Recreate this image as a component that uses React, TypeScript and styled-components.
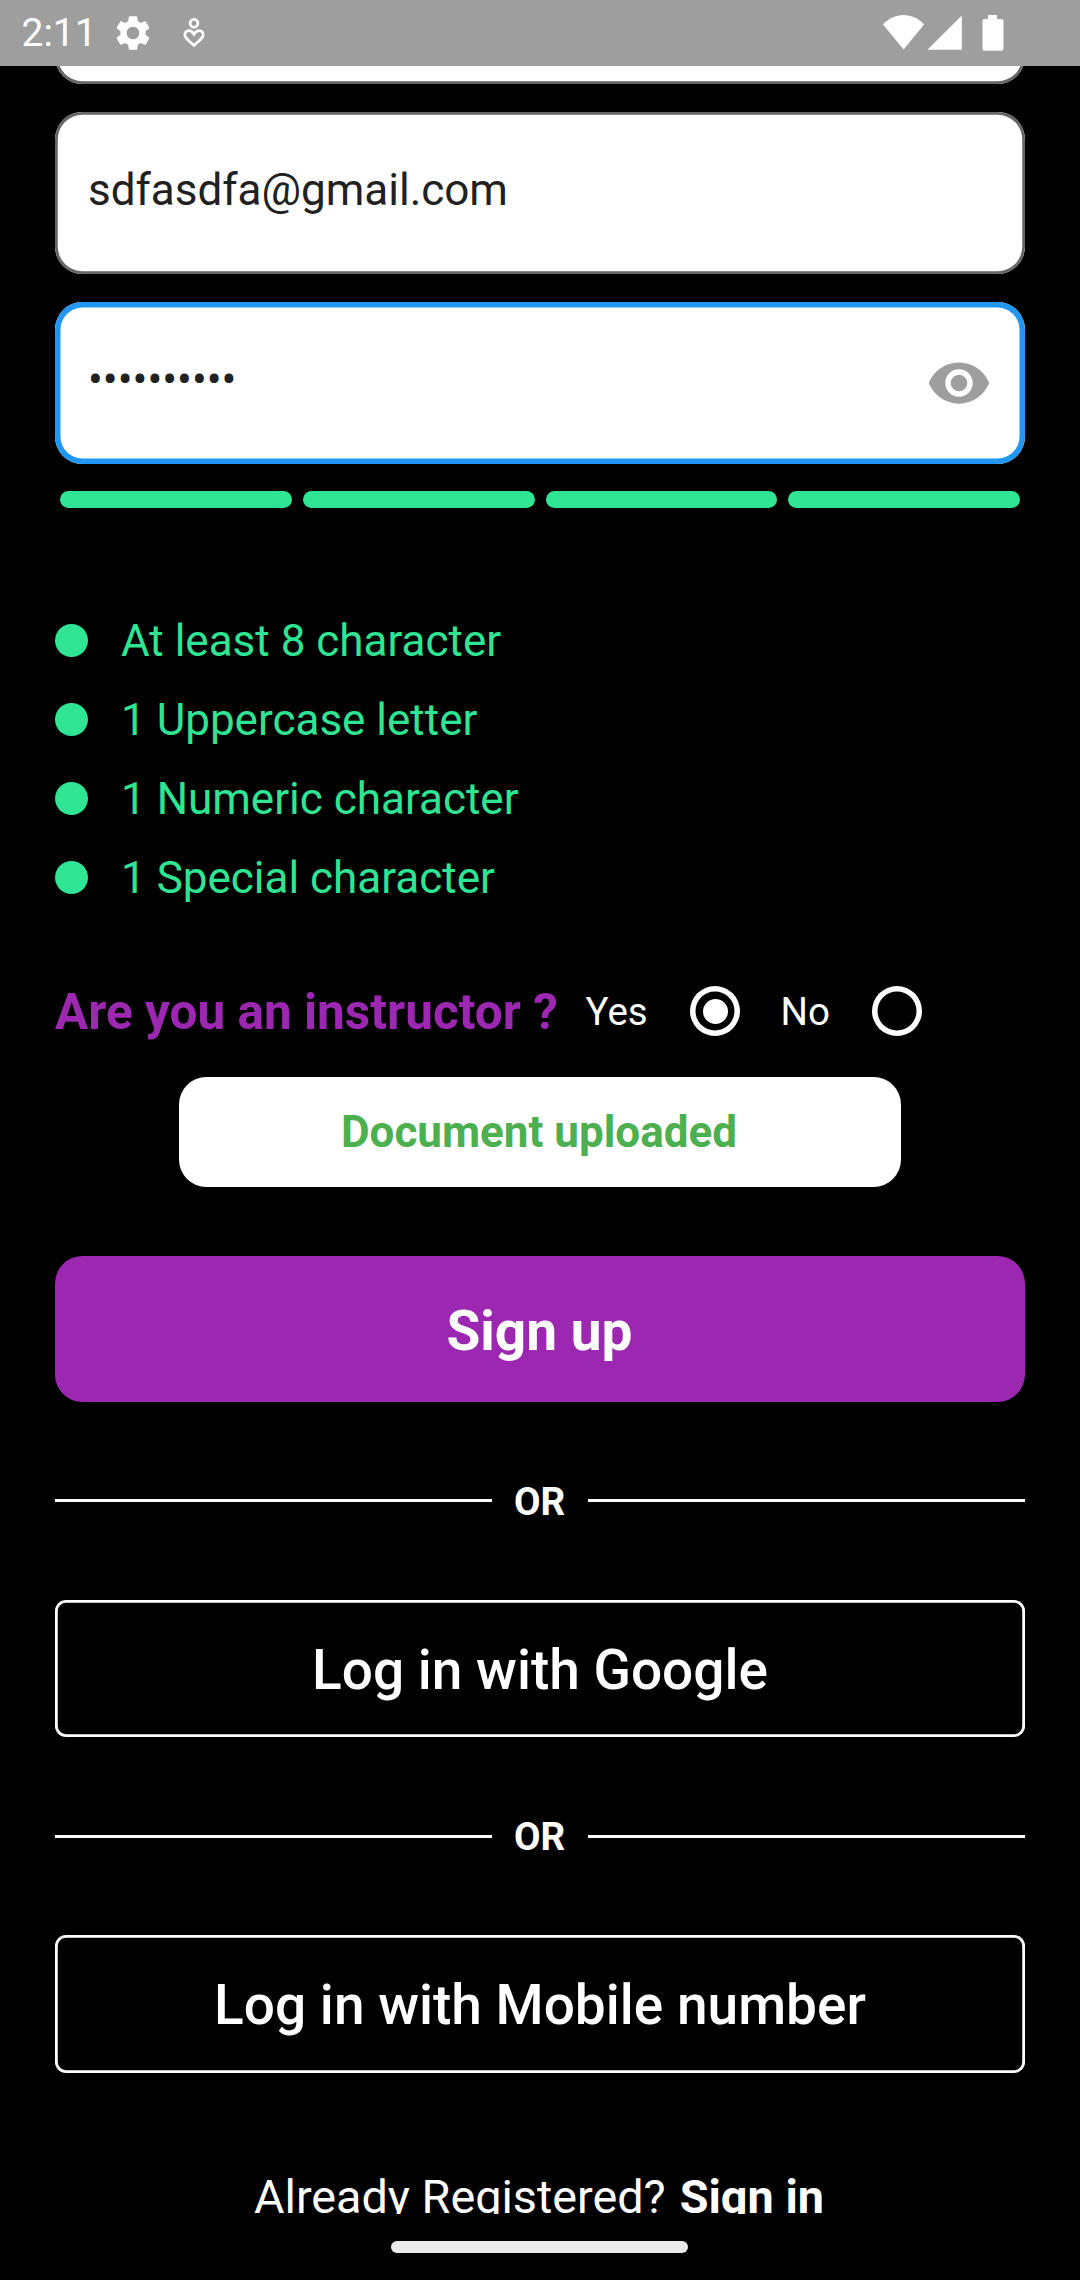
import React, { useState } from "react";
import styled, { createGlobalStyle } from "styled-components";
import { MdSettings, MdVisibility } from "react-icons/md";

const GlobalStyle = createGlobalStyle`
  * { box-sizing: border-box; }
  body { margin: 0; background: #000; font-family: Roboto, sans-serif; }
`;

const Screen = styled.div`
  width: 1080px;
  height: 2280px;
  display: flex;
  flex-direction: column;
  background: #000;
  color: #fff;
  overflow: hidden;
`;

const StatusBar = styled.header`
  height: 66px;
  flex: none;
  display: flex;
  align-items: center;
  justify-content: space-between;
  padding: 0 76px 0 21.5px;
  background: #9e9e9e;
`;

const StatusGroup = styled.div`
  display: flex;
  align-items: center;
  height: 66px;
`;

const Clock = styled.span`
  width: 90.8px;
  font-size: 39px;
  line-height: 70px;
  white-space: nowrap;
`;

const GearSlot = styled.span`
  display: flex;
  width: 70px;
`;

const Viewport = styled.main`
  flex: 1;
  min-height: 0;
  overflow: hidden;
`;

const Form = styled.div`
  display: flex;
  flex-direction: column;
  margin-top: -144px;
  padding: 0 55px;
`;

const Field = styled.label<{ $focused?: boolean }>`
  display: flex;
  height: 162.25px;
  margin-bottom: 27.75px;
  padding: 51.5px 33px 0;
  border-radius: 27.5px;
  background: #fff;
  box-shadow: inset 0 0 0 ${(p) => (p.$focused ? "5.5px #2196f3" : "2.75px #666")};
`;

const FieldText = styled.span`
  flex: 1;
  color: #212121;
  font-size: 44px;
  line-height: 52px;
`;

const EyeButton = styled.button`
  width: 66px;
  height: 66px;
  margin: -3.5px 0 0 0;
  padding: 0;
  border: 0;
  background: none;
  color: #9e9e9e;
`;

const Strength = styled.div`
  display: grid;
  grid-template-columns: repeat(4, 1fr);
  gap: 11px;
  height: 17px;
  margin-top: -1px;
  padding: 0 5px;
`;

const StrengthBar = styled.span`
  border-radius: 8.5px;
  background: #2fe594;
`;

const Rules = styled.ul`
  display: flex;
  flex-direction: column;
  gap: 27px;
  margin: 107px 0 0;
  padding: 0;
  list-style: none;
`;

const Rule = styled.li`
  display: flex;
  align-items: center;
  gap: 33px;
  height: 52px;
  color: #2fe594;
  font-size: 44px;
  line-height: 52px;
`;

const Dot = styled.span`
  width: 33px;
  height: 33px;
  margin-bottom: 1px;
  border-radius: 50%;
  background: currentColor;
`;

const Instructor = styled.div`
  display: flex;
  align-items: center;
  height: 132px;
  margin-top: 41px;
`;

const Question = styled.h2`
  width: 530.5px;
  margin: 0;
  color: #9c27b0;
  font-size: 49.5px;
  font-weight: 700;
  line-height: 58px;
  white-space: nowrap;
  padding-top: 2px;
`;

const Choice = styled.button<{ $labelWidth: number }>`
  display: grid;
  grid-template-columns: ${(p) => p.$labelWidth}px 50px;
  align-items: center;
  margin-right: 40.5px;
  padding: 0;
  border: 0;
  background: none;
  color: #fff;
  font: 400 38.5px/46px Roboto, sans-serif;
  text-align: left;
`;

const ChoiceLabel = styled.span`
  padding-top: 1px;
`;

const Ring = styled.span`
  display: flex;
  align-items: center;
  justify-content: center;
  width: 50px;
  height: 50px;
  border-radius: 50%;
  box-shadow: inset 0 0 0 5.5px #fff;
`;

const RingDot = styled.span`
  width: 25px;
  height: 25px;
  border-radius: 50%;
  background: #fff;
`;

const Button = styled.button`
  display: flex;
  align-items: center;
  justify-content: center;
  padding: 0;
  border: 0;
  font-family: Roboto, sans-serif;
`;

const UploadButton = styled(Button)`
  align-self: center;
  width: 722.5px;
  height: 110px;
  padding-right: 2px;
  border-radius: 27.5px;
  background: #fff;
  color: #4caf50;
  font-size: 44px;
  font-weight: 700;
`;

const SignUpButton = styled(Button)`
  height: 145.75px;
  margin-top: 69px;
  padding: 4px 1px 0 0;
  border-radius: 27.5px;
  background: #9c27b0;
  color: #fff;
  font-size: 55px;
  font-weight: 700;
`;

const OutlineButton = styled(Button)`
  height: 137.5px;
  border-radius: 11px;
  background: none;
  box-shadow: inset 0 0 0 2.75px #fff;
  color: #fff;
  font-size: 55px;
  font-weight: 500;
  padding-top: 2.6px;
`;

const Divider = styled.div`
  display: grid;
  grid-template-columns: 1fr 96px 1fr;
  align-items: center;
  height: 198px;
`;

const DividerLabel = styled.span`
  padding: 1px 1px 0 0;
  font-size: 38.5px;
  font-weight: 700;
  line-height: 47px;
  text-align: center;
`;

const DividerLine = styled.span`
  height: 3px;
  background: #fff;
`;

const Footer = styled.p`
  display: flex;
  justify-content: center;
  gap: 14px;
  margin: 95.5px 0 0;
  padding-right: 2px;
  font-size: 46.75px;
  line-height: 58px;
  white-space: pre;
`;

const NavBar = styled.footer`
  display: flex;
  justify-content: center;
  align-items: center;
  flex: none;
  height: 66px;
  padding-right: 1px;
`;

const NavPill = styled.span`
  width: 297px;
  height: 12px;
  border-radius: 6px;
  background: #eaeaea;
`;

const HeartPersonIcon = () => (
  <svg width="24" height="34" viewBox="0 0 24 34" fill="none" stroke="#fff" strokeWidth="2.7">
    <circle cx="12" cy="7.3" r="3.9" />
    <path d="M12 29.4C6 24.2 2.8 21.6 2.8 18.9c0-2.6 1.8-4.2 4.1-4.2 2.2 0 3.6 1.3 5.1 3.6 1.5-2.3 2.9-3.6 5.1-3.6 2.3 0 4.1 1.6 4.1 4.2 0 2.7-3.2 5.3-9.2 10.5z" />
  </svg>
);

const SignalIcons = () => (
  <svg width="121" height="36" viewBox="0 0 121 36" fill="#fff">
    <path d="M20.6 34.5 0 9.5C5.500 3.500 12.800 0 20.600 0s15.100 3.500 20.500 9.500z" />
    <path d="M44.500 34.800 78.800 0.600v34.200z" />
    <path d="M105 0h9v4h4.500a2 2 0 0 1 2 2v27.800a2 2 0 0 1-2 2h-17a2 2 0 0 1-2-2V6a2 2 0 0 1 2-2h3.500z" />
  </svg>
);

const rules = ["At least 8 character", "1 Uppercase letter", "1 Numeric character", "1 Special character"];

const OrDivider = () => (
  <Divider>
    <DividerLine />
    <DividerLabel>OR</DividerLabel>
    <DividerLine />
  </Divider>
);

export default function App() {
  const [instructor, setInstructor] = useState(true);
  return (
    <Screen>
      <GlobalStyle />
      <StatusBar>
        <StatusGroup>
          <Clock>2:11</Clock>
          <GearSlot>
            <MdSettings size={42} />
          </GearSlot>
          <HeartPersonIcon />
        </StatusGroup>
        <StatusGroup>
          <SignalIcons />
        </StatusGroup>
      </StatusBar>
      <Viewport>
        <Form>
          <Field />
          <Field>
            <FieldText>sdfasdfa@gmail.com</FieldText>
          </Field>
          <Field $focused>
            <FieldText>••••••••••</FieldText>
            <EyeButton aria-label="Show password">
              <MdVisibility size={66} />
            </EyeButton>
          </Field>
          <Strength>
            {rules.map((r) => (
              <StrengthBar key={r} />
            ))}
          </Strength>
          <Rules>
            {rules.map((r) => (
              <Rule key={r}>
                <Dot />
                {r}
              </Rule>
            ))}
          </Rules>
          <Instructor>
            <Question>Are you an instructor ?</Question>
            <Choice $labelWidth={104.5} onClick={() => setInstructor(true)}>
              <ChoiceLabel>Yes</ChoiceLabel>
              <Ring>{instructor && <RingDot />}</Ring>
            </Choice>
            <Choice $labelWidth={91.5} onClick={() => setInstructor(false)}>
              <ChoiceLabel>No</ChoiceLabel>
              <Ring>{!instructor && <RingDot />}</Ring>
            </Choice>
          </Instructor>
          <UploadButton>Document uploaded</UploadButton>
          <SignUpButton>Sign up</SignUpButton>
          <OrDivider />
          <OutlineButton>Log in with Google</OutlineButton>
          <OrDivider />
          <OutlineButton>Log in with Mobile number</OutlineButton>
          <Footer>
            <span>Already Registered?</span>
            <b>Sign in</b>
          </Footer>
        </Form>
      </Viewport>
      <NavBar>
        <NavPill />
      </NavBar>
    </Screen>
  );
}
